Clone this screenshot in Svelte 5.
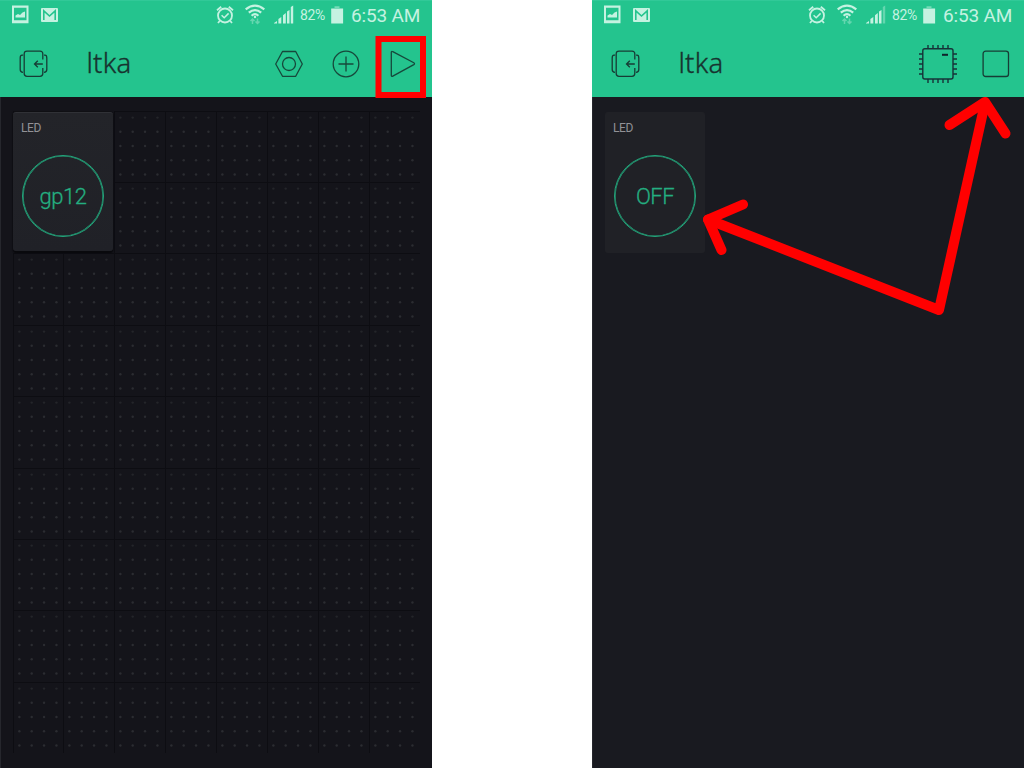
<script>
  const screens = [
    { id: 'edit', value: 'gp12', running: false },
    { id: 'run', value: 'OFF', running: true }
  ];
  const cells = Array.from({ length: 69 });
  const pins = [0, 1, 2, 3, 4];
</script>

<main>
  {#each screens as s (s.id)}
    <section class="phone" class:running={s.running}>
      <header>
        <div class="status">
          <svg class="picture" width="17" height="19" viewBox="0 0 17 19">
            <path fill-rule="evenodd" d="M0 .5h16.5v17.7H0zM2 2.7v12.5h12.5V2.7z" fill="currentColor" />
            <path d="M3.5 12.5v-2l2.5-1.5 2 1 2.5-2.5 2.5-1v6z" fill="currentColor" />
          </svg>
          <svg class="mail" width="17" height="14" viewBox="0 0 17 14">
            <rect width="17" height="14" rx="1" fill="currentColor" />
            <path d="M2.8 12V2.8L8.5 8l5.7-5.2V12" fill="none" stroke="#24c48e" stroke-width="1.6" />
          </svg>
          <span class="space"></span>
          <svg class="alarm" width="18" height="20" viewBox="0 0 18 20" fill="none" stroke="currentColor" stroke-width="1.8">
            <circle cx="9" cy="10.5" r="7" />
            <path d="M1 5.2 5.2 1.7M12.8 1.7 17 5.2M3.7 16 2 18M14.3 16 16 18" />
            <path d="m5.6 10.2 2.6 2.6 4.4-4.4" stroke-width="1.5" />
          </svg>
          <svg class="wifi" width="20" height="21" viewBox="0 0 20 21" fill="none" stroke="currentColor" stroke-width="2.2">
            <path d="M.7 5.3Q10-2.2 19.3 5.3M3.8 8.7Q10 3.5 16.2 8.7M6.6 11.7Q10 8.5 13.4 11.7" />
            <circle cx="10" cy="13" r="1.2" fill="currentColor" stroke="none" />
            <path opacity=".4" stroke-width="1.5" d="M7.5 20v-5M5.5 17l2-2 2 2M12.5 14.5v5M10.5 17.5l2 2 2-2" />
          </svg>
          <svg class="signal" width="20" height="19" viewBox="0 0 20 19" fill="currentColor">
            <path d="M0 18.5h3V16L0 18zM4.4 18.5h2.9V12l-2.9 2z" />
            <path d="M9 18.5h2.8V8L9 10.2zM13 18.5h2.5V5L13 6.6z" />
            <path opacity={s.running ? 0.4 : 1} d="M16.8 18.5h2.4V.5L16.8 2z" />
          </svg>
          <span class="percent">82%</span>
          <svg class="battery" width="13" height="18" viewBox="0 0 13 18" fill="currentColor">
            <path opacity=".5" d="M3.5.3h5V2h3.6v1.5H.2V2h3.3z" />
            <rect x=".2" y="3" width="11.9" height="14.5" />
          </svg>
          <span class="time">6:53 AM</span>
        </div>
        <div class="toolbar">
          <svg class="exit" width="30" height="30" viewBox="0 0 30 30" fill="none" stroke="#173c35" stroke-width="1.3">
            <path d="M23.8 10.5V5q0-2.8-2.8-2.8H8Q5.2 2.2 5.2 5v19.5q0 2.8 2.8 2.8h13q2.8 0 2.8-2.8V19" />
            <path d="M4.2 6.2H3Q1.2 6.2 1.2 9v11.5q0 2.8 2.8 2.8M25 6.2h1q1.8 0 1.8 2.8v11.5q0 2.8-2.8 2.8M23.8 15h-8.3M18.8 11.7 15.5 15l3.3 3.3" />
          </svg>
          <span class="title">ltka</span>
          <span class="space"></span>
          {#if s.running}
            <svg class="chip" width="40" height="40" viewBox="0 0 40 40" fill="none" stroke="#173238" stroke-width="1.4">
              <rect x="4.8" y="4.8" width="30.2" height="30.2" rx="2" />
              {#each pins as p}
                <path d="M{10 + p * 5} 1v4M{10 + p * 5} 35v4M1 {10 + p * 5}h4M35 {10 + p * 5}h4" />
              {/each}
              <rect x="24" y="9.8" width="6" height="2" fill="#10232b" stroke="none" />
            </svg>
            <svg class="stop" width="28" height="28" viewBox="0 0 28 28">
              <rect x="1.1" y="1.1" width="25.4" height="25.4" rx="2.6" fill="none" stroke="#173c35" stroke-width="1.3" />
            </svg>
          {:else}
            <svg class="nut" width="30" height="28" viewBox="0 0 30 28" fill="none" stroke="#17483b" stroke-width="1.3">
              <path d="M8.5 1.5h13.2L28.3 14l-6.6 12.3H8.5L1.7 14z" stroke-linejoin="round" />
              <circle cx="15" cy="14" r="6.5" />
            </svg>
            <svg class="add" width="28" height="28" viewBox="0 0 28 28" fill="none" stroke="#17483b" stroke-width="1.3">
              <circle cx="14" cy="14" r="12.8" />
              <path d="M14 6.5v15M6.5 14h15" />
            </svg>
            <svg class="play" width="26" height="28" viewBox="0 0 26 28">
              <path d="M1.3 2.5Q1.3.8 2.8 1.7L23.8 12.7Q25.2 13.7 23.8 14.6L2.8 26.1Q1.3 26.9 1.3 25.2Z" fill="none" stroke="#17483b" stroke-width="1.3" />
            </svg>
          {/if}
        </div>
      </header>
      <div class="board">
        <div class="grid">
          {#if !s.running}
            {#each cells as _}
              <svg class="cell" viewBox="0 0 51 71.4" preserveAspectRatio="none">
                {#each [5.5, 18.1, 30.7, 43.4] as x}
                  {#each [5.7, 20, 34.5, 48.9, 63.3] as y, i}
                    <circle cx={x} cy={y} r="1.25" fill="#2b2c31" opacity={i === 0 ? 0.7 : 1} />
                  {/each}
                {/each}
              </svg>
            {/each}
          {/if}
          <article class="widget">
            <h2>LED</h2>
            <div class="dial"><span>{s.value}</span></div>
          </article>
        </div>
      </div>
    </section>
  {/each}
  <svg class="marks" width="1024" height="768" viewBox="0 0 1024 768" fill="none" stroke="#f00">
    <path d="M378.5 39h44.5v56h-44.5z" stroke-width="6" />
    <g stroke-width="10" stroke-linecap="round" stroke-linejoin="round">
      <path d="M949.5 125 985 102l20.5 31.5" />
      <path d="M743 204.5 708 219.5 721.5 250" />
      <path d="M985 103 939 310 708 219.5" />
    </g>
  </svg>
</main>

<style>
  :global(body) { margin: 0; background: #fff; }
  main { position: relative; display: flex; justify-content: space-between; width: 1024px; height: 768px; overflow: hidden; font-family: Roboto, sans-serif; }
  .phone { width: 432px; height: 768px; display: flex; flex-direction: column; background: #14141a; }
  .running { background: #191a20; }
  header { height: 97px; background: #24c48e; box-sizing: border-box; border-top: 1px solid #31c998; flex: none; }
  svg { display: block; flex: none; }
  .status { height: 28px; display: flex; align-items: center; box-sizing: border-box; padding: 0 10px 0 12px; color: #c5f2e1; }
  .picture { margin-top: -1px; }
  .mail { margin-left: 12px; margin-top: -1px; }
  .space { flex: 1; }
  .alarm { margin-right: 1px; margin-top: -1px; }
  .wifi { margin-left: 10px; margin-top: -1px; }
  .signal { margin-left: 9px; margin-top: -1px; }
  .percent { width: 27px; margin-left: 6px; font-size: 14px; letter-spacing: -.35px; }
  .battery { margin-left: 4px; }
  .time { width: 71px; margin-left: 7px; font-size: 19px; letter-spacing: -.15px; white-space: nowrap; }
  .toolbar { height: 68px; display: flex; align-items: center; box-sizing: border-box; padding: 1px 16px 0 19px; }
  .title { margin: 0 0 0 37.5px; color: #17332f; font-family: "Noto Sans", sans-serif; font-size: 27.5px; line-height: 34px; font-weight: 300; letter-spacing: .2px; -webkit-text-stroke: .35px #17332f; }
  .title { margin-top: -1px; }
  .add { margin-left: 28px; }
  .play { margin-left: 30px; }
  .nut, .add { position: relative; left: -.5px; }
  .stop { margin-left: 24px; }
  .running .toolbar { padding-right: 14.5px; }
  .board { flex: 1; padding: 14px 12px 15px; border-left: 1px solid #26272d; border-bottom: 1px solid #292a30; }
  .grid { display: grid; grid-template: repeat(9, 71.4px) / repeat(8, 50.9px); width: 407px; height: 642.6px; }
  .cell { width: 50.9px; height: 71.4px; margin: -.4px 0 0 -.5px; box-sizing: border-box; border: solid #0d0d12; border-width: 1px 0 0 1px; }
  .widget { grid-area: 1 / 1 / 3 / 3; position: relative; width: 100px; height: 139px; margin: 1px 0 0; box-sizing: border-box; padding: 9px 9px 0; border-top: 1px solid #303136; border-radius: 3px; background: linear-gradient(#232429, #202127); box-shadow: 0 2px 1px #09090d, 0 0 1px 1px #101015; }
  .cell:nth-child(1) { grid-area: 1 / 1; }
  .running .widget { height: 141px; background: #202126; border-color: #202126; box-shadow: none; }
  h2 { margin: -1px 0 0 -1px; font-size: 12px; letter-spacing: -.4px; line-height: 14px; font-weight: 400; color: #919196; }
  .dial { display: flex; align-items: center; justify-content: center; width: 82px; height: 82px; margin-top: 20px; box-sizing: border-box; border: 1px solid #23a77c; border-radius: 50%; box-shadow: inset 0 0 0 .6px #23a77c; color: #24ae80; font-size: 22px; }
  .dial span { font-weight: 300; letter-spacing: -.5px; -webkit-text-stroke: .3px #24ae80; }
  .marks { position: absolute; inset: 0; pointer-events: none; }
</style>
